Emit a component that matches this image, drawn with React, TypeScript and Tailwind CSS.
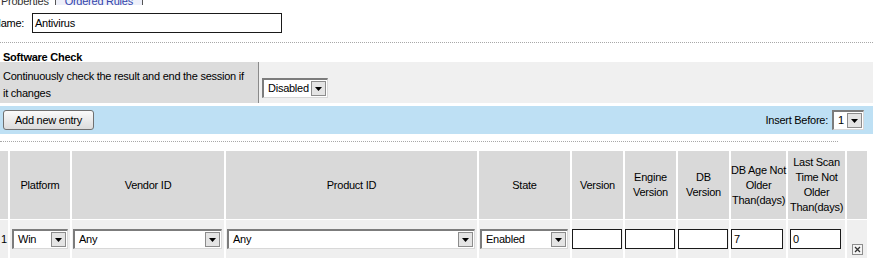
import React from 'react';

const Arrow = () => (
  <span className="mr-[1px] flex h-[15px] w-[15px] shrink-0 items-center justify-center border border-[#8c8c8c] bg-[#e4e4e4]">
    <svg width="7" height="4" viewBox="0 0 7 4">
      <polygon points="0,0 7,0 3.5,4" fill="#000" />
    </svg>
  </span>
);

const Select = ({ value, className }: { value: string; className: string }) => (
  <div
    className={`flex h-[20px] items-center border-b border-l-2 border-r border-t-2 border-b-[#d8d8d8] border-l-[#7c7c7c] border-r-[#d8d8d8] border-t-[#7c7c7c] bg-white ${className}`}
  >
    <span className="flex-1 truncate pl-[4px]">{value}</span>
    <Arrow />
  </div>
);

const TextBox = ({ value, className }: { value?: string; className: string }) => (
  <div className={`flex h-[20px] items-center border border-[#1a1a1a] bg-white pl-[2px] ${className}`}>
    {value}
  </div>
);

const HEADERS = [
  { lines: [], w: 'w-[8px]' },
  { lines: ['Platform'], w: 'w-[60px]' },
  { lines: ['Vendor ID'], w: 'w-[152px]' },
  { lines: ['Product ID'], w: 'w-[251px]' },
  { lines: ['State'], w: 'w-[91px]' },
  { lines: ['Version'], w: 'w-[51px]' },
  { lines: ['Engine', 'Version'], w: 'w-[51px]' },
  { lines: ['DB', 'Version'], w: 'w-[51px]' },
  { lines: ['DB Age Not', 'Older', 'Than(days)'], w: 'w-[55px]' },
  { lines: ['Last Scan', 'Time Not', 'Older', 'Than(days)'], w: 'w-[57px]' },
  { lines: [], w: 'w-[20px]' },
];

export default function App() {
  return (
    <div className="h-[267px] w-[873px] overflow-hidden bg-white font-['Liberation_Sans',Arial,sans-serif] text-[11px] tracking-[-0.25px] text-black">
      {/* tabs, cut off at the top */}
      <div className="h-[5px] overflow-hidden">
        <div className="-mt-[9px] flex items-end">
          <span className="pl-[1px] text-[#333]">Properties</span>
          <span className="ml-[6px] border-x border-[#555] bg-[#eef0fa] px-[9px] pt-[2px] text-[#3344aa] underline">
            Ordered Rules
          </span>
        </div>
      </div>

      {/* name */}
      <div className="mt-[8px] flex items-center">
        <span className="-ml-[7px] w-[39px]">Name:</span>
        <TextBox value="Antivirus" className="w-[250px]" />
      </div>

      <div className="mt-[9px] border-t border-dotted border-[#a8a8a8]" />

      <div className="mt-[8px] h-[11px] pl-[3px] font-bold leading-[13px]">Software Check</div>

      {/* software check row */}
      <div className="flex h-[41px]">
        <div className="w-[259px] border-r border-[#8a8a8a] bg-[#dcdcdc] px-[3px] pt-[6px] leading-[17px]">
          Continuously check the result and end the session if
          <br />
          it changes
        </div>
        <div className="flex-1 bg-[#f0f0f0] pl-[3px] pt-[16px]">
          <Select value="Disabled" className="w-[66px]" />
        </div>
      </div>

      {/* toolbar */}
      <div className="mt-[3px] flex h-[28px] items-center justify-between bg-[#bee0f4] pl-[3px] pr-[9px]">
        <button className="h-[20px] w-[91px] rounded-[3px] border border-[#707070] bg-gradient-to-b from-[#fafafa] to-[#dcdcdc] text-[11px] tracking-[-0.25px]">
          Add new entry
        </button>
        <div className="flex items-center gap-[4px]">
          <span>Insert Before:</span>
          <Select value="1" className="w-[32px]" />
        </div>
      </div>

      <div className="mt-[7px] w-[838px] border-t border-dotted border-[#a8a8a8]" />

      {/* table */}
      <div className="mt-[9px] flex flex-col gap-[1px]">
        <div className="flex h-[68px] gap-[2px]">
          {HEADERS.map((h, i) => (
            <div
              key={i}
              className={`flex shrink-0 flex-col items-center justify-center bg-[#d9d9d9] text-center leading-[15px] ${h.w}`}
            >
              {h.lines.map((l) => (
                <span key={l} className="whitespace-nowrap">
                  {l}
                </span>
              ))}
            </div>
          ))}
        </div>
        <div className="flex h-[38px] gap-[2px]">
          <div className="flex w-[8px] shrink-0 items-center bg-[#efefef] pl-[1px] pt-[1px]">1</div>
          <div className="flex w-[60px] shrink-0 items-center bg-[#efefef] pl-[2px]">
            <Select value="Win" className="w-[56px]" />
          </div>
          <div className="flex w-[152px] shrink-0 items-center bg-[#efefef] pl-[1px]">
            <Select value="Any" className="w-[149px]" />
          </div>
          <div className="flex w-[251px] shrink-0 items-center bg-[#efefef] pl-[1px]">
            <Select value="Any" className="w-[248px]" />
          </div>
          <div className="flex w-[91px] shrink-0 items-center bg-[#efefef] pl-[1px]">
            <Select value="Enabled" className="w-[88px]" />
          </div>
          <div className="flex w-[51px] shrink-0 items-center bg-[#efefef]">
            <TextBox className="w-[50px]" />
          </div>
          <div className="flex w-[51px] shrink-0 items-center bg-[#efefef]">
            <TextBox className="w-[50px]" />
          </div>
          <div className="flex w-[51px] shrink-0 items-center bg-[#efefef]">
            <TextBox className="w-[50px]" />
          </div>
          <div className="flex w-[55px] shrink-0 items-center bg-[#efefef]">
            <TextBox value="7" className="w-[52px]" />
          </div>
          <div className="flex w-[57px] shrink-0 items-center bg-[#efefef] pl-[2px]">
            <TextBox value="0" className="w-[51px]" />
          </div>
          <div className="flex w-[20px] shrink-0 items-end justify-center bg-[#efefef] pb-[3px]">
            <span className="flex h-[11px] w-[11px] items-center justify-center border border-[#8c8c8c] bg-[#f4f4f4]">
              <svg width="7" height="7" viewBox="0 0 7 7">
                <path d="M1 1 L6 6 M6 1 L1 6" stroke="#333" strokeWidth="1.3" />
              </svg>
            </span>
          </div>
        </div>
      </div>
    </div>
  );
}
